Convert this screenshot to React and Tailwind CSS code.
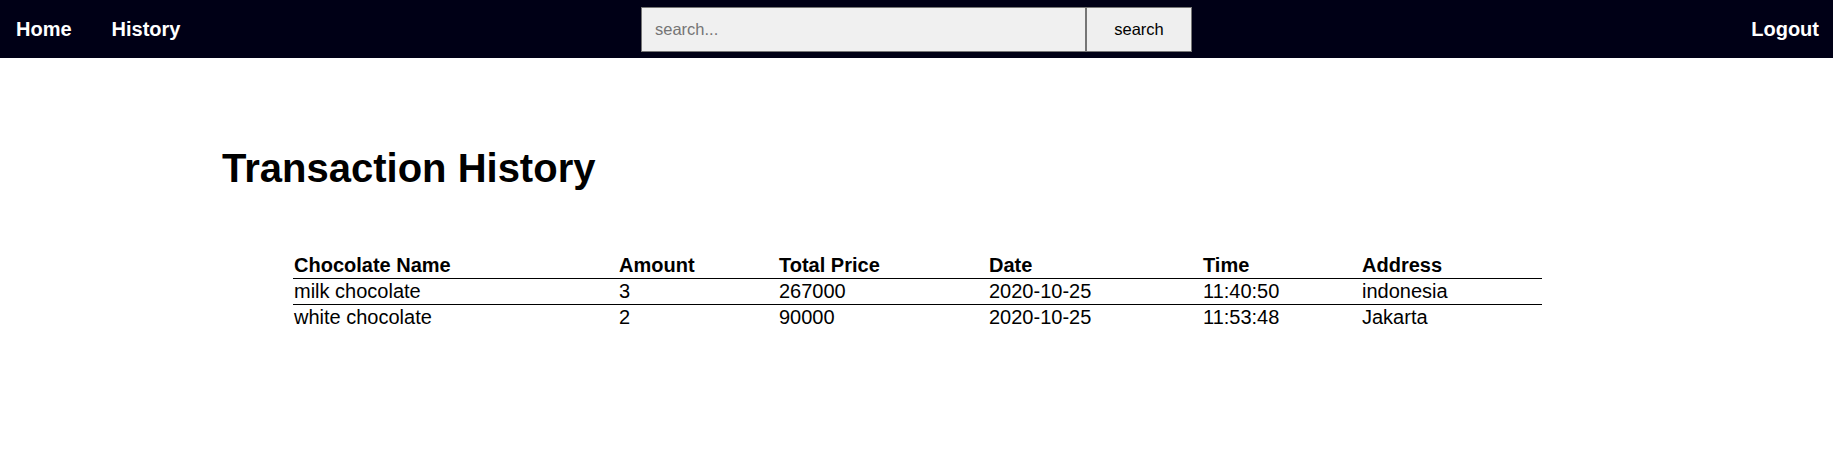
import React from "react";

const rows = [
  { name: "milk chocolate", amount: 3, total: 267000, date: "2020-10-25", time: "11:40:50", address: "indonesia" },
  { name: "white chocolate", amount: 2, total: 90000, date: "2020-10-25", time: "11:53:48", address: "Jakarta" },
];

export default function App() {
  return (
    <div className="min-h-screen bg-white text-black font-['Liberation_Sans',Arial,sans-serif]">
      {/* Navbar */}
      <nav className="h-[58px] bg-[#000016] grid grid-cols-[1fr_auto_1fr] items-center">
        <div className="flex items-center gap-[40px] pl-[16px] text-white font-bold text-[20px]">
          <a href="#">Home</a>
          <a href="#">History</a>
        </div>
        <form className="flex h-[45px]" onSubmit={(e) => e.preventDefault()}>
          <input
            type="text"
            placeholder="search..."
            className="w-[445px] h-full bg-[#f0f0f0] border border-[#767676] pl-[13px] text-[16.5px] text-black placeholder:text-[#757575] outline-none"
          />
          <button className="w-[106px] h-full bg-[#efefef] border border-[#767676] text-[16.5px] text-black">
            search
          </button>
        </form>
        <div className="flex justify-end pr-[14px] text-white font-bold text-[20px]">
          <a href="#">Logout</a>
        </div>
      </nav>

      {/* Main Content */}
      <main className="pl-[222px] pt-[87px]">
        <h1 className="text-[40px] leading-[46px] font-bold">Transaction History</h1>

        <table className="ml-[71px] mt-[62px] w-[1249px] table-fixed border-collapse text-[20px] leading-[23px]">
          <thead>
            <tr className="border-b border-black">
              <th className="w-[325px] p-[1px] text-left font-bold">Chocolate Name</th>
              <th className="w-[160px] p-[1px] text-left font-bold">Amount</th>
              <th className="w-[210px] p-[1px] text-left font-bold">Total Price</th>
              <th className="w-[214px] p-[1px] text-left font-bold">Date</th>
              <th className="w-[159px] p-[1px] text-left font-bold">Time</th>
              <th className="w-[181px] p-[1px] text-left font-bold">Address</th>
            </tr>
          </thead>
          <tbody>
            {rows.map((row, i) => (
              <tr key={i} className={i < rows.length - 1 ? "border-b border-black" : ""}>
                <td className="p-[1px]">{row.name}</td>
                <td className="p-[1px]">{row.amount}</td>
                <td className="p-[1px]">{row.total}</td>
                <td className="p-[1px]">{row.date}</td>
                <td className="p-[1px]">{row.time}</td>
                <td className="p-[1px]">{row.address}</td>
              </tr>
            ))}
          </tbody>
        </table>
      </main>
    </div>
  );
}
